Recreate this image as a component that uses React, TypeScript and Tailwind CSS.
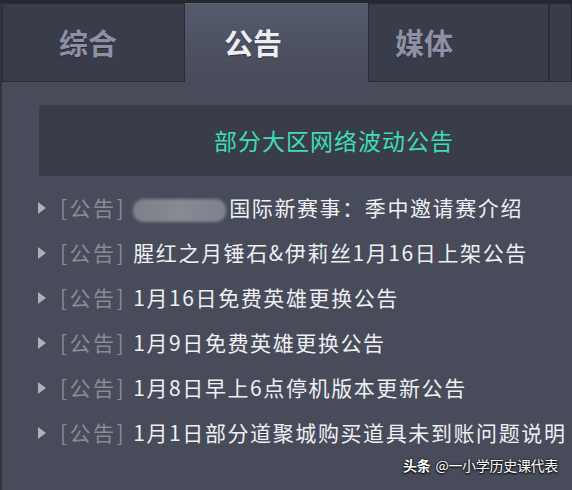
const cjk = "font-['Noto_Sans_CJK_SC','Noto_Sans',sans-serif]";

const tabs = [
  { label: "综合", w: "w-[183px]", pl: "pl-[56px]", active: false },
  { label: "公告", w: "w-[183px]", pl: "pl-[39px]", active: true },
  { label: "媒体", w: "w-[181px]", pl: "pl-[26px]", active: false },
];

const notices = [
  { blurred: true, text: "国际新赛事：季中邀请赛介绍" },
  { text: "腥红之月锤石&伊莉丝1月16日上架公告" },
  { text: "1月16日免费英雄更换公告" },
  { text: "1月9日免费英雄更换公告" },
  { text: "1月8日早上6点停机版本更新公告" },
  { text: "1月1日部分道聚城购买道具未到账问题说明" },
];

export default function App() {
  return (
    <div className={`relative w-[572px] h-[490px] overflow-hidden bg-[#474b5a] ${cjk}`}>
      <div className="h-[3px] bg-[#26282e]" />

      {/* tab bar */}
      <div className="flex h-[79px] border-l-2 border-[#30333c]">
        {tabs.map((t) =>
          t.active ? (
            <div
              key={t.label}
              className={`${t.w} ${t.pl} flex items-center bg-gradient-to-b from-[#555a6d] to-[#474b5a] border-t border-[#5e6276]`}
            >
              <span className="text-[29px] font-bold text-[#eceef4] [text-shadow:0_1px_1px_#2a2c34]">
                {t.label}
              </span>
            </div>
          ) : (
            <div
              key={t.label}
              className={`${t.w} ${t.pl} flex items-center bg-[#393c49] border border-[#2b2d36]`}
            >
              <span className="text-[29px] font-bold text-[#8e91a6] [text-shadow:0_1px_1px_#2a2c34]">
                {t.label}
              </span>
            </div>
          )
        )}
        <div className="flex-1 bg-[#393c49] border border-[#2b2d36]" />
      </div>

      {/* body */}
      <div className="border-l-2 border-[#30333c] h-full">
        <div className="pt-[23px] pl-[37px]">
          <div className="h-[71px] bg-[#393c49] rounded-l-[3px] flex items-center pl-[175px]">
            <span className="text-[23px] tracking-[1px] text-[#3fdcb8]">部分大区网络波动公告</span>
          </div>
        </div>

        <ul className="pt-[9px] pl-[36px]">
          {notices.map((n, i) => (
            <li key={i} className="h-[45px] flex items-center text-[21px] tracking-[1.6px] whitespace-nowrap">
              <svg width="8" height="12" viewBox="0 0 8 12" className="mr-[14px] shrink-0">
                <path d="M0 0 L8 6 L0 12 Z" fill="#aeb1b9" />
              </svg>
              <span className="text-[#888c97] tracking-[2.5px]">[公告]</span>
              <span className="ml-[7px] text-[#eef0f3]">
                {n.blurred && (
                  <span className="inline-block align-middle mr-[3px] w-[93px] h-[23px] rounded-[10px] bg-gradient-to-r from-[#7d8089] via-[#878a93] to-[#7f828c] blur-[1.5px]" />
                )}
                {n.text}
              </span>
            </li>
          ))}
        </ul>
      </div>

      <div className="absolute right-[14px] bottom-[14px] flex text-[14px] tracking-[-0.3px] text-white [text-shadow:0_0_2px_#000,0_1px_2px_#000]">
        <span className="font-bold mr-[5px]">头条</span>
        <span>@一小学历史课代表</span>
      </div>
    </div>
  );
}
